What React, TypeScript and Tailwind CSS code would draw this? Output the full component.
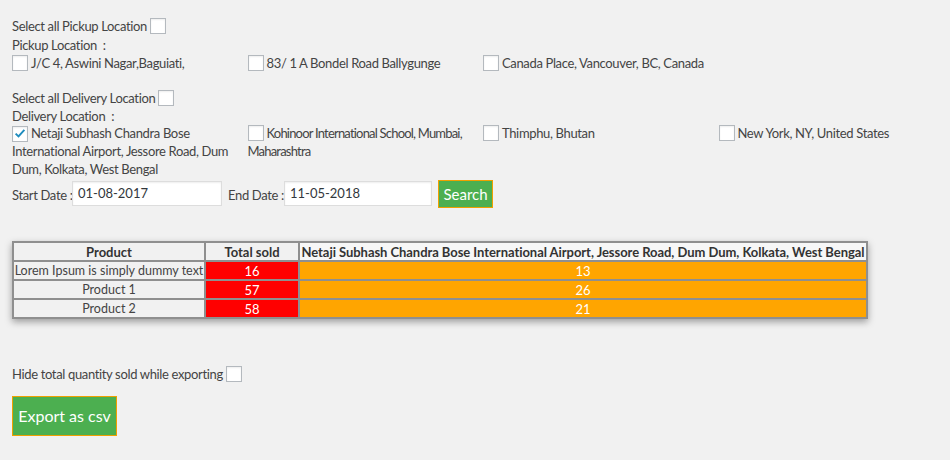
import React from 'react';

const Box = ({ checked = false }: { checked?: boolean }) => (
  <span className="inline-flex items-center justify-center w-4 h-4 align-[-3px] bg-white border border-[#b4b9be] mr-[3px] shadow-[inset_0_1px_2px_rgba(0,0,0,0.07)]">
    {checked && (
      <svg viewBox="0 0 16 16" className="w-[15px] h-[15px]">
        <path d="M3 8.2 L6.3 11.4 L13 3.8" fill="none" stroke="#1e8cbe" strokeWidth="2.2" />
      </svg>
    )}
  </span>
);

const pickups = ['J/C 4, Aswini Nagar,Baguiati,', '83/ 1 A Bondel Road Ballygunge', 'Canada Place, Vancouver, BC, Canada'];

const rows = [
  { name: 'Lorem Ipsum is simply dummy text', total: 16, loc: 13 },
  { name: 'Product 1', total: 57, loc: 26 },
  { name: 'Product 2', total: 58, loc: 21 },
];

export default function App() {
  return (
    <div className="w-[950px] h-[460px] bg-[#f1f1f1] text-[#444] text-[13px] leading-[18px] tracking-[-0.35px] font-['Lato','Noto_Sans',sans-serif] pl-3 pt-[17px] overflow-hidden">
      <div className="h-[19px]">
        Select all Pickup Location <Box />
      </div>
      <div className="h-[18px]">Pickup Location &nbsp;:</div>
      <div className="grid grid-cols-4 w-[942px]">
        {pickups.map((p) => (
          <div key={p} className="pr-2">
            <Box />
            {p}
          </div>
        ))}
      </div>

      <div className="mt-[17px] h-[18px]">
        Select all Delivery Location <Box />
      </div>
      <div className="h-[17px]">Delivery Location &nbsp;:</div>
      <div className="grid grid-cols-4 w-[942px]">
        <div className="pr-[6px]">
          <Box checked />
          Netaji Subhash Chandra Bose International Airport, Jessore Road, Dum Dum, Kolkata, West Bengal
        </div>
        <div className="tracking-[-0.8px]">
          <Box />
          Kohinoor International School, Mumbai, Maharashtra
        </div>
        <div>
          <Box />
          Thimphu, Bhutan
        </div>
        <div>
          <Box />
          New York, NY, United States
        </div>
      </div>

      <div className="flex items-center h-[27px] mt-[2px]">
        <span className="w-[60px] mt-[3px] whitespace-nowrap">Start Date :</span>
        <div className="w-[150px] h-[25px] bg-white border border-[#ddd] pl-[5px] text-[#32373c] leading-[23px] tracking-normal shadow-[inset_0_1px_2px_rgba(0,0,0,0.07)]">
          01-08-2017
        </div>
        <span className="ml-[6px] w-[56px] mt-[3px] whitespace-nowrap">End Date :</span>
        <div className="w-[148px] h-[25px] bg-white border border-[#ddd] pl-[5px] text-[#32373c] leading-[23px] tracking-normal shadow-[inset_0_1px_2px_rgba(0,0,0,0.07)]">
          11-05-2018
        </div>
        <button className="ml-[6px] w-[55px] h-[28px] bg-[#4caf50] border border-[#f0a000] text-white text-[15px] tracking-normal">
          Search
        </button>
      </div>

      <table className="mt-[34px] w-[854px] table-fixed border-collapse shadow-[0_3px_7px_rgba(0,0,0,0.35)] text-[12.5px] leading-[16px] tracking-normal">
        <colgroup>
          <col className="w-[192px]" />
          <col className="w-[94px]" />
          <col className="w-[568px]" />
        </colgroup>
        <thead>
          <tr className="h-[19px] font-bold text-[#333] text-[13px]">
            <th className="border-2 border-[#8f8f8f] bg-[#f1f1f1]">Product</th>
            <th className="border-2 border-[#8f8f8f] bg-[#f1f1f1]">Total sold</th>
            <th className="border-2 border-[#8f8f8f] bg-[#f7f7f7] whitespace-nowrap overflow-hidden tracking-[-0.05px]">
              Netaji Subhash Chandra Bose International Airport, Jessore Road, Dum Dum, Kolkata, West Bengal
            </th>
          </tr>
        </thead>
        <tbody>
          {rows.map((r) => (
            <tr key={r.name} className="h-[19px] text-center">
              <td className="border-2 border-[#8f8f8f] bg-[#f1f1f1] whitespace-nowrap">{r.name}</td>
              <td className="border-2 border-[#8f8f8f] bg-[#ff0000] text-white text-[13px]">{r.total}</td>
              <td className="border-2 border-[#8f8f8f] bg-[#ffa500] text-white text-[13px]">{r.loc}</td>
            </tr>
          ))}
        </tbody>
      </table>

      <div className="mt-[46px] h-[18px]">
        Hide total quantity sold while exporting <Box />
      </div>
      <button className="mt-[13px] w-[105px] h-[40px] bg-[#4caf50] border border-[#f0a000] text-white text-[16px] tracking-normal">
        Export as csv
      </button>
    </div>
  );
}
